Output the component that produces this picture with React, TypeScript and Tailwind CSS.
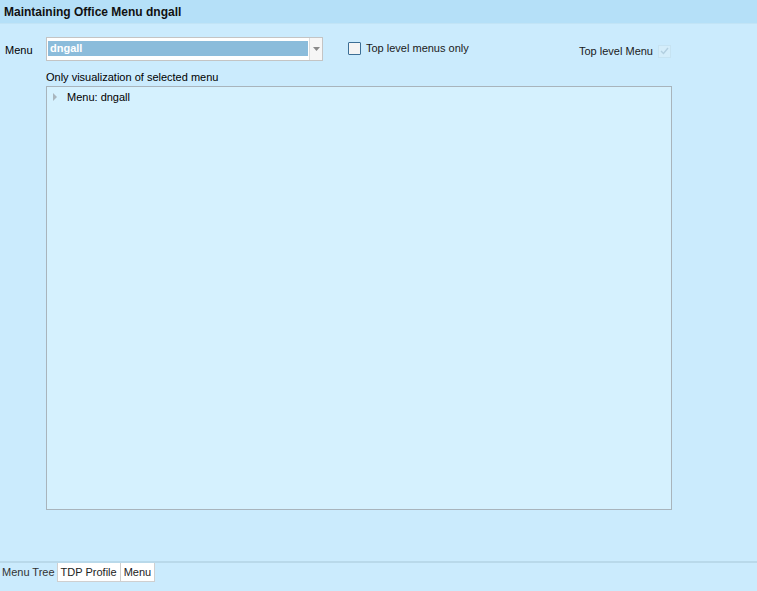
import React from "react";

export default function App() {
  return (
    <div
      className="w-[757px] h-[591px] bg-[#cbebfd] flex flex-col text-[#000] overflow-hidden"
      style={{ fontFamily: '"Liberation Sans", Arial, sans-serif' }}
    >
      <div className="h-[24px] bg-[#b5e0f8] flex items-center pl-[4px] border-b border-[#c2e4f6]">
        <span className="text-[12px] font-bold text-[#111]">Maintaining Office Menu dngall</span>
      </div>

      <div className="flex-1 flex flex-col">
        <div className="flex items-start pt-[13px]">
          <div className="w-[46px] pl-[5px] pt-[5px] text-[11px]">Menu</div>
          <div className="flex h-[24px] w-[277px] border border-[#c4c4c4] bg-white">
            <div className="flex-1 py-[3px] pl-[1px] pr-[1px]">
              <div className="h-[15px] bg-[#8bbcdb] text-white text-[11px] font-bold leading-[15px] pl-[2px]">
                dngall
              </div>
            </div>
            <div className="w-[13px] border-l border-[#dcdcdc] bg-[#f6f6f6] flex items-center justify-center">
              <svg width="7" height="4" viewBox="0 0 7 4">
                <path d="M0 0 L7 0 L3.5 4 Z" fill="#8a8a8a" />
              </svg>
            </div>
          </div>
          <div className="flex items-center ml-[25px] pt-[3px]">
            <div className="w-[13px] h-[13px] border border-[#3c6e95] bg-[#f4f4f4] rounded-[1px]" />
            <span className="ml-[5px] text-[11px] text-[#1a1a1a]">Top level menus only</span>
          </div>
          <div className="flex items-center ml-auto mr-[86px] pt-[6px]">
            <span className="text-[11px] text-[#1a1a1a]">Top level Menu</span>
            <div className="ml-[5px] w-[13px] h-[13px] border border-[#c6e3f2] bg-[#d4edfa] flex items-center justify-center">
              <svg width="9" height="8" viewBox="0 0 9 8">
                <path d="M1 4 L3.5 6.5 L8 1" fill="none" stroke="#b2cfe0" strokeWidth="1.4" />
              </svg>
            </div>
          </div>
        </div>

        <div className="ml-[46px] mt-[10px] text-[11px] leading-[13px]">Only visualization of selected menu</div>

        <div className="ml-[46px] mt-[2px] w-[626px] h-[424px] bg-[#d5f1fe] border border-[#a8b4bc]">
          <div className="flex items-center pt-[3px] pl-[6px]">
            <svg width="5" height="8" viewBox="0 0 5 8">
              <path d="M0 0 L4 4 L0 8 Z" fill="#a9b6be" />
            </svg>
            <span className="ml-[9px] text-[11px] leading-[14px]">Menu: dngall</span>
          </div>
        </div>
      </div>

      <div className="h-[30px] border-t-2 border-[#b9d9ea] flex items-start">
        <div className="h-[19px] px-[2px] text-[11px] leading-[19px] text-[#333]">Menu Tree</div>
        <div className="h-[19px] px-[3px] bg-white border border-t-0 border-[#cfcfcf] text-[11px] leading-[18px] text-[#222]">TDP Profile</div>
        <div className="h-[19px] px-[3px] bg-white border border-t-0 border-l-0 border-[#cfcfcf] text-[11px] leading-[18px] text-[#222]">Menu</div>
      </div>
    </div>
  );
}
